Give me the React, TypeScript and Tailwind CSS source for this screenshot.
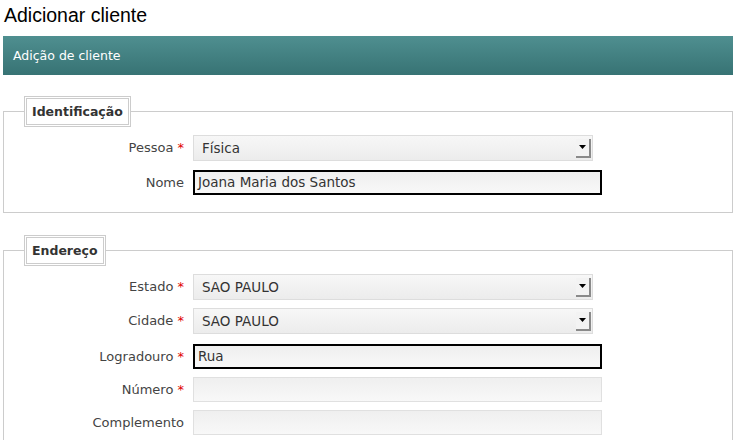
import React from "react";

const SANS = { fontFamily: '"DejaVu Sans", Verdana, sans-serif' } as React.CSSProperties;

function Arrow() {
  return (
    <div className="flex h-[19px] w-[15px] items-center justify-center border-r-2 border-b-2 border-[#8a8a8a] bg-[#f3f3f3]">
      <svg width="7" height="4" viewBox="0 0 7 4">
        <path d="M0 0H7L3.5 4Z" fill="#000" />
      </svg>
    </div>
  );
}

function Select({ value }: { value: string }) {
  return (
    <div className="flex h-[26px] w-[400px] items-center justify-between border border-[#dddddd] bg-linear-to-b from-[#f7f7f7] to-[#ececec] pr-[1px] pl-[8px] text-[13.5px] text-[#333]">
      <span>{value}</span>
      <Arrow />
    </div>
  );
}

function Input({ value, active }: { value?: string; active?: boolean }) {
  return (
    <div
      className={
        active
          ? "flex h-[25px] w-[409px] items-center border-2 border-black bg-linear-to-b from-[#efefef] to-[#f8f8f8] pl-[3px] text-[13.5px] text-[#333]"
          : "flex h-[25px] w-[409px] items-center border border-[#e0e0e0] bg-linear-to-b from-[#efefef] to-[#f8f8f8] pl-[4px] text-[13.5px] text-[#333]"
      }
    >
      {value}
    </div>
  );
}

function Row({
  label,
  req,
  children,
  className,
}: {
  label: string;
  req?: boolean;
  children: React.ReactNode;
  className?: string;
}) {
  return (
    <div className={"flex items-center " + (className ?? "")}>
      <div className="w-[180px] text-right text-[13px] text-[#444]">
        {label}
        {req && <span className="text-[#e00000]"> *</span>}
      </div>
      <div className="ml-[9px]">{children}</div>
    </div>
  );
}

export default function App() {
  return (
    <div className="w-[737px] bg-white" style={SANS}>
      <div
        className="h-[36px] pt-[4px] pl-[4px] text-[19.5px] leading-[23px] text-black"
        style={{ fontFamily: '"Liberation Sans", Arial, sans-serif' }}
      >
        Adicionar cliente
      </div>
      <div className="mx-[3px] flex h-[39px] w-[730px] items-center bg-linear-to-b from-[#4f8f90] to-[#377374] pt-[1px] pl-[10px] text-[12.5px] text-white">
        Adição de cliente
      </div>

      <fieldset className="mx-[3px] mt-[21px] w-[730px] min-w-0 border border-[#cccccc] px-0 pt-[8px] pb-[17px]">
        <legend className="ml-[20px] border-[3px] border-double border-[#cccccc] px-[5px] text-[12.5px] leading-[25px] font-bold text-[#333]">
          Identificação
        </legend>
        <Row label="Pessoa" req className="mb-[9px]">
          <Select value="Física" />
        </Row>
        <Row label="Nome">
          <Input value="Joana Maria dos Santos" active />
        </Row>
      </fieldset>

      <fieldset className="mx-[3px] mt-[22px] w-[730px] min-w-0 border border-[#cccccc] px-0 pt-[8px] pb-[24px]">
        <legend className="ml-[20px] border-[3px] border-double border-[#cccccc] px-[5px] text-[12.5px] leading-[25px] font-bold text-[#333]">
          Endereço
        </legend>
        <Row label="Estado" req className="mb-[8px]">
          <Select value="SAO PAULO" />
        </Row>
        <Row label="Cidade" req className="mb-[10px]">
          <Select value="SAO PAULO" />
        </Row>
        <Row label="Logradouro" req className="mb-[8px]">
          <Input value="Rua" active />
        </Row>
        <Row label="Número" req className="mb-[8px]">
          <Input />
        </Row>
        <Row label="Complemento">
          <Input />
        </Row>
      </fieldset>
    </div>
  );
}
